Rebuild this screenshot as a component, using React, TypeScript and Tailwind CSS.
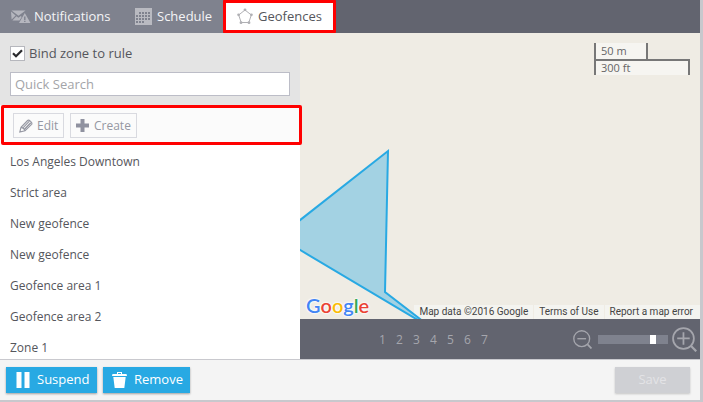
import { useState } from "react";

const zones = [
  "Los Angeles Downtown",
  "Strict area",
  "New geofence",
  "New geofence",
  "Geofence area 1",
  "Geofence area 2",
  "Zone 1",
];

const pages = [1, 2, 3, 4, 5, 6, 7];

function NotificationsIcon() {
  return (
    <svg width="20" height="14" viewBox="0 0 20 14" fill="#b5b6be">
      <path d="M0.500 0.500h14L7.500 5.800z" />
      <path d="M0 1.500l4.600 3.900L0.600 9.600z" />
      <path d="M1.400 10.600l4-4.300 2.100 1.400 2.300-1.700 0.900 0.900-2.200 3.700z" />
      <path
        fillRule="evenodd"
        d="M13.800 3l5.700 10H8zM13.100 6.400v3.600h1.400V6.400zM13.100 10.700v1.400h1.400v-1.400z"
      />
    </svg>
  );
}

function ScheduleIcon() {
  return (
    <svg width="17" height="17" viewBox="0 0 17 17">
      <path d="M0 0h17v17H0z" fill="#b9bac1" />
      <path
        d="M4 5h12M1 8h15M1 11h15M1 14h9"
        stroke="#7f828e"
        strokeWidth="2"
        strokeDasharray="2 1"
      />
    </svg>
  );
}

function PentagonIcon() {
  return (
    <svg width="16" height="17" viewBox="0 0 16 17" fill="#b0b0b4" stroke="#b0b0b4">
      <path d="M8 2L14.300 7 11.800 14.500H4.200L1.700 7z" fill="none" />
      <g stroke="none">
        <circle cx="8" cy="1.800" r="1.400" />
        <circle cx="14.400" cy="6.800" r="1.400" />
        <circle cx="12" cy="14.700" r="1.400" />
        <circle cx="4" cy="14.700" r="1.400" />
        <circle cx="1.600" cy="6.800" r="1.400" />
      </g>
    </svg>
  );
}

function PencilIcon() {
  return (
    <svg width="14" height="14" viewBox="0 0 14 14" fill="none" stroke="#9597a2" strokeWidth="1.100">
      <path d="M0.800 13L2 8.400 8.600 1.500C9.800 0.300 14 3.600 12.600 5.300L6 11.800z" />
      <path d="M2 8.400c1.900 0.200 3.600 1.600 4 3.400M4 8.800l6.400-6.600" />
      <path d="M5.600 10.300l6.200-6.500" strokeWidth="1.500" />
    </svg>
  );
}

function PlusIcon() {
  return (
    <svg width="13" height="13" viewBox="0 0 13 13" fill="#9092a0">
      <path d="M4.500 0h4v4.500H13v4H8.500V13h-4V8.500H0v-4h4.500z" />
    </svg>
  );
}

function PauseIcon() {
  return (
    <svg width="14" height="16" viewBox="0 0 14 16" fill="#fff">
      <path d="M0.500 0h5v16h-5zM8.500 0h5v16h-5z" />
    </svg>
  );
}

function TrashIcon() {
  return (
    <svg width="15" height="16" viewBox="0 0 15 16" fill="#fff">
      <path d="M5 0h5v2h4.500l0.500 2H0l0.500-2H5zM6 1v1h3V1z" fillRule="evenodd" />
      <path d="M1.300 5h12.400l-1.400 11H2.700z" />
    </svg>
  );
}

function Magnifier({ size, plus }: { size: number; plus?: boolean }) {
  return (
    <svg width={size} height={size} viewBox="0 0 24 24" fill="none" stroke="#a5a6ad">
      <circle cx="11" cy="11" r="10" strokeWidth="1.700" />
      <path d="M18.300 18.300l5 5" strokeWidth="2.200" />
      <path d={plus ? "M5 11h12M11 5v12" : "M5.500 11h11"} strokeWidth="1.700" />
    </svg>
  );
}

function Header() {
  return (
    <header className="flex h-[33px] bg-[#62646f] text-[13px]">
      <nav className="flex" aria-label="Rule settings">
        <button className="flex w-[123px] items-center gap-[3px] bg-[#7f828e] pl-[11px] font-medium text-[#f4f4f6]">
          <NotificationsIcon />
          Notifications
        </button>
        <button className="flex w-[100px] items-center gap-[5px] bg-[#7f828e] pl-3 font-medium text-[#f4f4f6]">
          <ScheduleIcon />
          Schedule
        </button>
        <button className="flex w-[113px] items-center gap-[5px] rounded-[1px] border-3 border-[#ff0000] bg-white pl-[11px] text-[#55565c]">
          <PentagonIcon />
          Geofences
        </button>
      </nav>
    </header>
  );
}

function Sidebar() {
  const [bound, setBound] = useState(true);
  const toolButton =
    "flex h-[25px] items-center border border-[#d9dae0] bg-[#fbfbfb] pt-px text-[12px] text-[#9597a2]";
  return (
    <aside className="flex w-[300px] shrink-0 flex-col bg-white">
      <div className="flex h-[72px] flex-col gap-[11px] bg-[#e4e4e4] px-2.5 pt-[13px]">
        <label className="flex h-[15px] items-center gap-1 text-[13px] text-[#55565c]">
          <span className="grid size-[15px] place-items-center">
            <input
              type="checkbox"
              checked={bound}
              onChange={(e) => setBound(e.target.checked)}
              className="col-start-1 row-start-1 size-[15px] appearance-none border border-[#b6b7bd] bg-white"
            />
            {bound && (
              <svg
                width="11"
                height="9"
                viewBox="0 0 11 9"
                className="pointer-events-none col-start-1 row-start-1"
                fill="none"
                stroke="#2b2b2e"
                strokeWidth="2.200"
              >
                <path d="M1 4.300l3 3L10 1.200" />
              </svg>
            )}
          </span>
          Bind zone to rule
        </label>
        <input
          type="search"
          aria-label="Quick Search"
          placeholder="Quick Search"
          className="h-6 w-full appearance-none border border-[#bcbdc7] bg-white px-1 text-[13px] text-[#55565c] outline-none placeholder:text-[#a3a4a8]"
        />
      </div>
      <div className="relative flex h-10 items-center gap-1.5 bg-[#fbfbfb] pl-[13px]">
        <button className={`${toolButton} w-[51px] gap-1 pl-[5px]`}>
          <PencilIcon />
          Edit
        </button>
        <button className={`${toolButton} w-[67px] gap-[5px] pl-[5px]`}>
          <PlusIcon />
          Create
        </button>
        <div className="pointer-events-none absolute inset-y-0 -right-0.5 left-px z-10 rounded-[2px] border-3 border-[#ff0000]" />
      </div>
      <ul className="h-[214px] overflow-hidden pt-px text-[12px] text-[#55565c]">
        {zones.map((zone, i) => (
          <li key={i} className="flex h-[31px] items-center px-2.5">
            {zone}
          </li>
        ))}
      </ul>
    </aside>
  );
}

function MapView() {
  return (
    <div className="relative flex-1 overflow-hidden bg-[#efece4]">
      <div className="absolute top-2.5 right-2.5 w-24 text-[11px] leading-[15px] text-[#666]">
        <div className="h-4 w-[54px] border-x-2 border-[#777] bg-[#f6f5f1] pl-[5px]">50 m</div>
        <div className="h-4 border-2 border-b-0 border-[#777] bg-[#f6f5f1] pl-[5px] leading-[14px]">
          300 ft
        </div>
      </div>
      <div className="absolute right-0 bottom-0 flex h-3.5 items-center gap-px font-['Roboto',sans-serif] text-[10px] text-[#444]">
        <span className="bg-[#f4f4f0] px-[5px] leading-[14px]">Map data ©2016 Google</span>
        <a href="#terms" className="bg-[#f4f4f0] px-[5px] leading-[14px]">
          Terms of Use
        </a>
        <a href="#report" className="bg-[#f4f4f0] pr-[7px] pl-[5px] leading-[14px]">
          Report a map error
        </a>
      </div>
      <svg className="pointer-events-none absolute inset-0 size-full" aria-label="Geofence">
        <path
          d="M-10 195L88 118 85 259 133 296 -10 211z"
          fill="#28a9e3"
          fillOpacity="0.380"
          stroke="#28a9e3"
          strokeWidth="2"
        />
      </svg>
      <a
        href="#google"
        className="absolute bottom-0 left-1.5 font-['Lato',sans-serif] text-[20px] leading-[28px] font-semibold [text-shadow:0_0_2px_#fff,0_0_2px_#fff,0_0_3px_#fff]"
      >
        <span className="text-[#4285f4]">G</span>
        <span className="text-[#ea4335]">o</span>
        <span className="text-[#fbbc05]">o</span>
        <span className="text-[#4285f4]">g</span>
        <span className="text-[#34a853]">l</span>
        <span className="text-[#ea4335]">e</span>
      </a>
    </div>
  );
}

function MapControls() {
  const [zoom, setZoom] = useState(81);
  return (
    <div className="flex h-10 items-center justify-end bg-[#62646f] pr-[3px] text-[12px] text-[#a5a6ad]">
      <div className="mr-20 flex pt-px">
        {pages.map((page) => (
          <button key={page} className="w-[17px] text-center">
            {page}
          </button>
        ))}
      </div>
      <div className="flex items-center">
        <button aria-label="Zoom out">
          <Magnifier size={19} />
        </button>
        <input
          type="range"
          aria-label="Zoom"
          min={0}
          max={100}
          value={zoom}
          onChange={(e) => setZoom(Number(e.target.value))}
          className="mr-1 ml-1.5 h-[9px] w-[70px] appearance-none bg-[#7f828e] [&::-webkit-slider-thumb]:h-[9px] [&::-webkit-slider-thumb]:w-1.5 [&::-webkit-slider-thumb]:appearance-none [&::-webkit-slider-thumb]:bg-white"
        />
        <button aria-label="Zoom in">
          <Magnifier size={25} plus />
        </button>
      </div>
    </div>
  );
}

function Footer() {
  const action =
    "flex h-[26px] items-center bg-[#28a9e3] text-[13px] font-medium text-white shadow-[0_1px_2px_rgba(0,0,0,0.35)]";
  return (
    <footer className="flex h-[41px] items-start gap-1.5 border-t border-[#c9c9ce] bg-[#f4f4f4] pt-[7px] pr-2.5 pl-1.5">
      <button className={`${action} w-[91px] gap-[7px] pl-2.5`}>
        <PauseIcon />
        Suspend
      </button>
      <button className={`${action} w-[87px] gap-[7px] pl-[9px]`}>
        <TrashIcon />
        Remove
      </button>
      <button
        disabled
        className="ml-auto h-[26px] w-[75px] bg-[#cfd0d4] text-[13px] text-[#e3e3e6] shadow-[0_1px_2px_rgba(0,0,0,0.2)]"
      >
        Save
      </button>
    </footer>
  );
}

export default function App() {
  return (
    <div className="border-r-3 border-b-2 border-[#c8c8cd] font-['Open_Sans',sans-serif]">
      <Header />
      <main className="flex">
        <Sidebar />
        <section className="flex min-w-0 flex-1 flex-col" aria-label="Map">
          <MapView />
          <MapControls />
        </section>
      </main>
      <Footer />
    </div>
  );
}
